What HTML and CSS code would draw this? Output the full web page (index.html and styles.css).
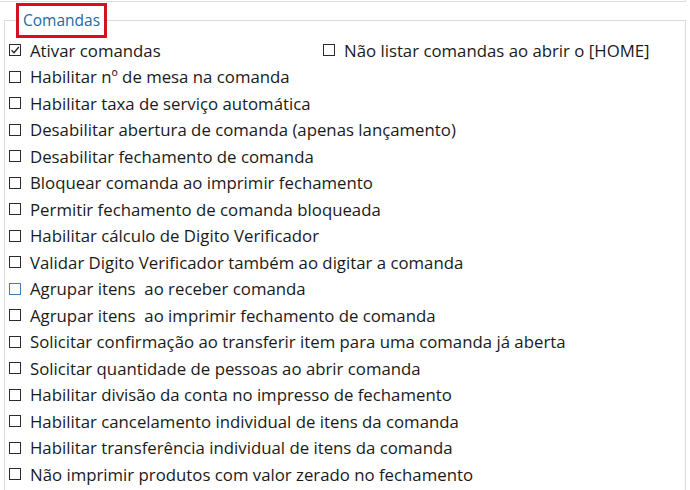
FILE: index.html
```html
<!DOCTYPE html>
<html lang="pt">
<head>
<meta charset="utf-8">
<link rel="stylesheet" href="styles.css">
</head>
<body>
<div class="prev"></div>
<fieldset class="group">
  <legend class="title">Comandas</legend>
  <div class="rows">
    <div class="row two">
      <label class="opt first"><span class="box checked"><svg viewBox="0 0 12 12" width="12" height="12"><path d="M2.5 6.2 L5 8.7 L9.8 3" fill="none" stroke="#222" stroke-width="1.3"/></svg></span>Ativar comandas</label>
      <label class="opt"><span class="box"></span>Não listar comandas ao abrir o [HOME]</label>
    </div>
    <label class="row opt"><span class="box"></span>Habilitar nº de mesa na comanda</label>
    <label class="row opt"><span class="box"></span>Habilitar taxa de serviço automática</label>
    <label class="row opt"><span class="box"></span>Desabilitar abertura de comanda (apenas lançamento)</label>
    <label class="row opt"><span class="box"></span>Desabilitar fechamento de comanda</label>
    <label class="row opt"><span class="box"></span>Bloquear comanda ao imprimir fechamento</label>
    <label class="row opt"><span class="box"></span>Permitir fechamento de comanda bloqueada</label>
    <label class="row opt"><span class="box"></span>Habilitar cálculo de Digito Verificador</label>
    <label class="row opt"><span class="box"></span>Validar Digito Verificador também ao digitar a comanda</label>
    <label class="row opt"><span class="box hover"></span>Agrupar itens&nbsp; ao receber comanda</label>
    <label class="row opt"><span class="box"></span>Agrupar itens&nbsp; ao imprimir fechamento de comanda</label>
    <label class="row opt"><span class="box"></span>Solicitar confirmação ao transferir item para uma comanda já aberta</label>
    <label class="row opt"><span class="box"></span>Solicitar quantidade de pessoas ao abrir comanda</label>
    <label class="row opt"><span class="box"></span>Habilitar divisão da conta no impresso de fechamento</label>
    <label class="row opt"><span class="box"></span>Habilitar cancelamento individual de itens da comanda</label>
    <label class="row opt"><span class="box"></span>Habilitar transferência individual de itens da comanda</label>
    <label class="row opt"><span class="box"></span>Não imprimir produtos com valor zerado no fechamento</label>
  </div>
</fieldset>
</body>
</html>
```
FILE: styles.css
```css
html, body {
  margin: 0;
  padding: 0;
  background: #fff;
  overflow: hidden;
}
body {
  width: 690px;
  height: 490px;
  font-family: "Open Sans", "Noto Sans", sans-serif;
  font-size: 16.8px;
  color: #1a1a1a;
}
.prev {
  width: 685px;
  height: 1px;
  border-bottom: 1px solid #dcdcdc;
  border-right: 1px solid #dcdcdc;
}
.group {
  margin: 1px 0 0 4px;
  width: 682px;
  box-sizing: border-box;
  border: 1px solid #dcdcdc;
  border-bottom: none;
  padding: 0 0 0 4px;
  height: 490px;
}
.title {
  margin-left: 7px;
  border: 3px solid #d4111d;
  padding: 6px 4px 6px 4px;
  color: #1f69a3;
  font-size: 15.5px;
  line-height: 17px;
}
.rows {
  display: flex;
  flex-direction: column;
  margin-top: -1px;
}
.row {
  height: 26.5px;
  flex: none;
  display: flex;
  align-items: center;
}
.opt {
  display: flex;
  align-items: center;
  white-space: nowrap;
}
.first {
  width: 314px;
}
.box {
  width: 12px;
  height: 12px;
  flex: none;
  box-sizing: border-box;
  border: 1.3px solid #2b2b2b;
  margin-right: 9px;
  position: relative;
}
.box svg {
  position: absolute;
  left: -1.3px;
  top: -1.3px;
}
.box.hover {
  border-color: #3d7db3;
}
```
